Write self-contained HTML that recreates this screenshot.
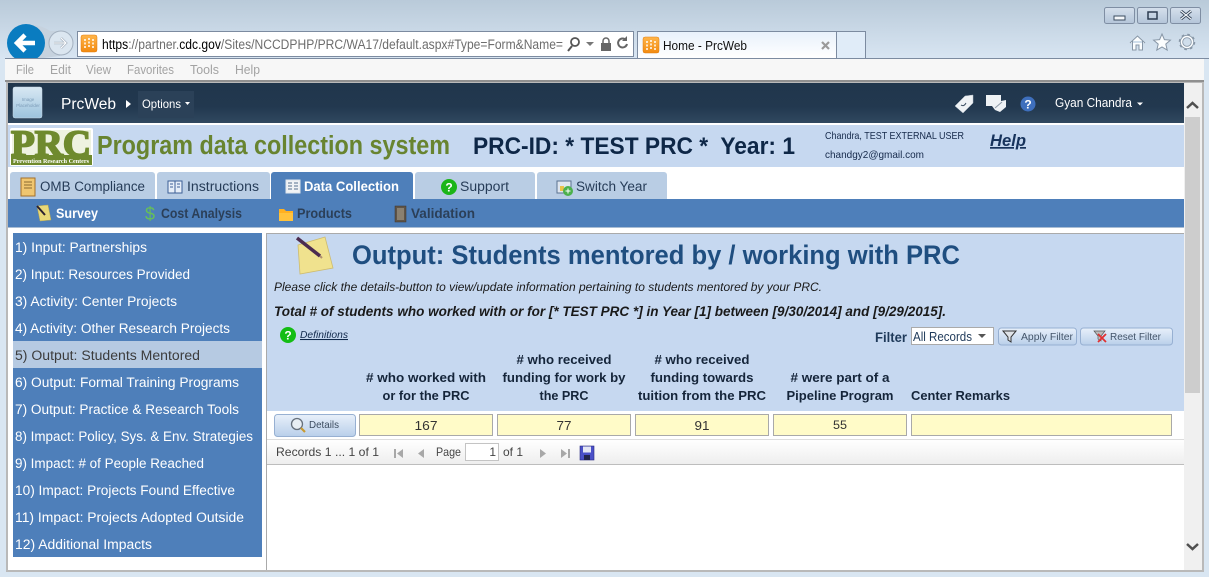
<!DOCTYPE html>
<html><head><meta charset="utf-8"><title>Home - PrcWeb</title>
<style>html,body{margin:0;padding:0;width:1209px;height:577px;overflow:hidden;background:#d9e6f2}svg{display:block}text{font-family:"Liberation Sans",sans-serif;white-space:pre}.n{font-size:13.5px;fill:#fff}</style></head><body>
<svg width="1209" height="577" viewBox="0 0 1209 577" xmlns="http://www.w3.org/2000/svg">
<defs>
<linearGradient id="chrome" x1="0" y1="0" x2="0" y2="1"><stop offset="0" stop-color="#b9cad9"/><stop offset="1" stop-color="#d9e6f3"/></linearGradient>
<linearGradient id="nav" x1="0" y1="0" x2="0" y2="1"><stop offset="0" stop-color="#20364c"/><stop offset=".6" stop-color="#22384f"/><stop offset="1" stop-color="#30485f"/></linearGradient>
<linearGradient id="btn" x1="0" y1="0" x2="0" y2="1"><stop offset="0" stop-color="#e8f0fa"/><stop offset="1" stop-color="#b9cfea"/></linearGradient>
<linearGradient id="tab" x1="0" y1="0" x2="0" y2="1"><stop offset="0" stop-color="#e8f1fb"/><stop offset="1" stop-color="#fff"/></linearGradient>
<linearGradient id="pager" x1="0" y1="0" x2="0" y2="1"><stop offset="0" stop-color="#fff"/><stop offset="1" stop-color="#eee"/></linearGradient>
<linearGradient id="win" x1="0" y1="0" x2="0" y2="1"><stop offset="0" stop-color="#d5e0ec"/><stop offset="1" stop-color="#b4c5d9"/></linearGradient>
<linearGradient id="ph" x1="0" y1="0" x2="0" y2="1"><stop offset="0" stop-color="#d8e8f3"/><stop offset="1" stop-color="#9cc3dd"/></linearGradient>
<linearGradient id="fav" x1="0" y1="0" x2="0" y2="1"><stop offset="0" stop-color="#ffb54a"/><stop offset="1" stop-color="#f28a10"/></linearGradient>
</defs>

<!-- window chrome -->
<rect width="1209" height="577" fill="#d9e6f2"/>
<rect width="1209" height="60" fill="url(#chrome)"/>
<g fill="url(#win)" stroke="#7f8ea3"><rect x="1104.500" y="7.500" width="30" height="16" rx="2"/><rect x="1137.500" y="7.500" width="30" height="16" rx="2"/><rect x="1170.500" y="7.500" width="30" height="16" rx="2"/></g>
<rect x="1114" y="16" width="11" height="4" fill="#f4f7fa" stroke="#3c4c60"/>
<rect x="1148" y="12" width="9" height="7" fill="none" stroke="#2c3c50" stroke-width="1.500"/>
<path d="M1181 11l10 8M1191 11l-10 8" stroke="#2c3c50" stroke-width="3"/><path d="M1181 11l10 8M1191 11l-10 8" stroke="#f0f4f8" stroke-width="1.200"/>

<!-- back/forward -->
<path d="M27 25 Q40 24 50 31 L60 31 L60 56 L27 60Z" fill="#c6d2de"/>
<circle cx="61" cy="43" r="12" fill="#dbe6f0" stroke="#a3b0bf"/>
<path d="M54 43h12M61 38l5 5-5 5" stroke="#aab5c2" stroke-width="2.500" fill="none"/>
<path d="M54 43h12M61 38l5 5-5 5" stroke="#fff" stroke-width="1" fill="none"/>
<circle cx="26" cy="43" r="19" fill="#0a7cc0"/>
<path d="M35 43H18M25 35l-8 8 8 8" stroke="#fff" stroke-width="4.500" fill="none"/>

<!-- address bar -->
<rect x="77.500" y="31.500" width="556" height="25" fill="#fff" stroke="#7c8ba0"/>
<rect x="81" y="35" width="16" height="17" rx="2" fill="url(#fav)" stroke="#e07c10" stroke-width=".5"/>
<path d="M85 39v9M89 38v10M93 39v9" stroke="#fff" stroke-width="1.500" stroke-dasharray="2 1.500"/>
<text x="102" y="49" font-size="13.500" textLength="461" lengthAdjust="spacingAndGlyphs" fill="#6d6d6d"><tspan fill="#000">https</tspan>://partner.<tspan fill="#000">cdc.gov</tspan>/Sites/NCCDPHP/PRC/WA17/default.aspx#Type=Form&amp;Name=</text>
<circle cx="575" cy="42" r="4" fill="none" stroke="#555" stroke-width="1.800"/><path d="M572 46l-4 5" stroke="#555" stroke-width="2"/>
<path d="M586 42h8l-4 4z" fill="#777"/>
<rect x="601" y="43" width="10" height="8" fill="#666"/><path d="M603 43v-2a3 3 0 0 1 6 0v2" fill="none" stroke="#666" stroke-width="1.500"/>
<path d="M626 40a4.500 4.500 0 1 0 1 4" fill="none" stroke="#666" stroke-width="2"/><path d="M627 36v5h-5z" fill="#666"/>

<!-- tab -->
<rect x="637.500" y="31.500" width="199" height="27" fill="url(#tab)" stroke="#7c8ba0"/>
<rect x="836.500" y="31.500" width="29" height="27" fill="#e0ecf8" stroke="#7c8ba0"/>
<rect x="643" y="37" width="16" height="16" rx="2" fill="url(#fav)" stroke="#e07c10" stroke-width=".5"/>
<path d="M647 41v9M651 40v10M655 41v9" stroke="#fff" stroke-width="1.500" stroke-dasharray="2 1.500"/>
<text x="663" y="50" font-size="13" textLength="84" lengthAdjust="spacingAndGlyphs" fill="#111">Home - PrcWeb</text>
<path d="M822 42l7 7M829 42l-7 7" stroke="#9a9a9a" stroke-width="2.200"/>

<!-- home star gear -->
<path d="M1130 43l7.500-7 7.500 7M1132.500 41v9h3.500v-5h3v5h3.500v-9" fill="#fbfdfe" stroke="#8796a6"/>
<path d="M1162 34l2.400 5.600 6 .5-4.600 4 1.400 6-5.200-3.200-5.200 3.200 1.400-6-4.600-4 6-.5z" fill="#fbfdfe" stroke="#8796a6"/>
<circle cx="1187" cy="42" r="5.500" fill="none" stroke="#8796a6" stroke-width="3.200"/><circle cx="1187" cy="42" r="7" fill="none" stroke="#8796a6" stroke-width="2.500" stroke-dasharray="2.500 3"/><circle cx="1187" cy="42" r="5.500" fill="none" stroke="#fbfdfe" stroke-width="1.500"/>

<!-- menu bar -->
<rect x="5" y="58" width="1204" height="1" fill="#7c8ba0"/>
<rect x="5" y="59" width="1199" height="21" fill="#f7f7f7"/>
<rect x="5" y="80" width="1199" height="2" fill="#8f8f8f"/>
<g font-size="12.500" fill="#a3a3a3"><text x="16" y="74" textLength="18" lengthAdjust="spacingAndGlyphs">File</text><text x="50" y="74" textLength="21" lengthAdjust="spacingAndGlyphs">Edit</text><text x="86" y="74" textLength="25" lengthAdjust="spacingAndGlyphs">View</text><text x="127" y="74" textLength="47" lengthAdjust="spacingAndGlyphs">Favorites</text><text x="190" y="74" textLength="29" lengthAdjust="spacingAndGlyphs">Tools</text><text x="235" y="74" textLength="25" lengthAdjust="spacingAndGlyphs">Help</text></g>

<!-- page -->
<rect x="6" y="82" width="1198" height="490" fill="#b9b9b9"/>
<rect x="8" y="83" width="1194" height="487" fill="#fff"/>
<rect x="8" y="83" width="1176" height="40" fill="url(#nav)"/>
<rect x="13" y="87" width="29" height="31" rx="2" fill="url(#ph)" stroke="#c6d6e4" stroke-width=".5"/>
<text x="28" y="101" font-size="4.500" fill="#7d9cb8" text-anchor="middle">Image</text><text x="28" y="107" font-size="4.500" fill="#7d9cb8" text-anchor="middle">Placeholder</text>
<text x="61" y="109" font-size="15.500" textLength="55" lengthAdjust="spacingAndGlyphs" fill="#fff">PrcWeb</text>
<path d="M126 100l5 4-5 4z" fill="#fff"/>
<rect x="138" y="91" width="56" height="27" fill="#2b4158"/>
<text x="142" y="108" font-size="12" textLength="39" lengthAdjust="spacingAndGlyphs" fill="#fff">Options</text>
<path d="M185 102h5l-2.500 3z" fill="#fff"/>
<path d="M955 106l10-10 8-1 0 8-10 10z" fill="#eef2f5" stroke="#b8c2cc" stroke-width=".5"/><path d="M961 105q3 2 5-2" stroke="#3a4e62" fill="none"/>
<path d="M986 95h15v6l5-1 0 7-6 5-5-2-3-4h-6z" fill="#eef2f5"/><path d="M995 108l7-6" stroke="#8a97a5"/>
<circle cx="1028" cy="104" r="7.500" fill="#3e6fbd"/><text x="1028" y="108.500" font-size="12" font-weight="bold" fill="#fff" text-anchor="middle">?</text>
<text x="1055" y="107" font-size="12.500" textLength="77" lengthAdjust="spacingAndGlyphs" fill="#fff">Gyan Chandra</text>
<path d="M1137 102.500h6l-3 3z" fill="#fff"/>

<!-- scrollbar -->
<rect x="1184" y="83" width="18" height="487" fill="#f0f0f0"/>
<rect x="1185" y="117" width="15" height="276" fill="#cdcdcd"/>
<path d="M1187 108l5.500-5 5.500 5" fill="none" stroke="#505050" stroke-width="2.500"/>
<path d="M1187 544l5.500 5 5.500-5" fill="none" stroke="#505050" stroke-width="2.500"/>

<!-- header band -->
<rect x="8" y="125" width="1176" height="42" fill="#c6d8f0"/>
<rect x="10" y="128" width="83" height="38" rx="2" fill="#fff"/>
<rect x="12" y="130" width="79" height="26" fill="#eef2e0"/>
<text x="51" y="156" font-size="37" font-weight="bold" textLength="80" lengthAdjust="spacingAndGlyphs" text-anchor="middle" stroke="#6f8a2e" stroke-width="1.800" style="font-family:'Liberation Serif',serif" fill="#6f8a2e">PRC</text>
<rect x="11" y="155" width="81" height="10" fill="#6f8a2e"/>
<text x="51" y="163" font-size="6.500" font-weight="bold" text-anchor="middle" textLength="76" lengthAdjust="spacingAndGlyphs" style="font-family:'Liberation Serif',serif" fill="#fff">Prevention Research Centers</text>
<text x="97" y="154" font-size="25.500" font-weight="bold" textLength="353" lengthAdjust="spacingAndGlyphs" fill="#688430">Program data collection system</text>
<text x="473" y="154" font-size="24.500" font-weight="bold" textLength="322" lengthAdjust="spacingAndGlyphs" fill="#0e2747">PRC-ID: * TEST PRC *  Year: 1</text>
<text x="825" y="139" font-size="10.500" textLength="139" lengthAdjust="spacingAndGlyphs" fill="#15294a">Chandra, TEST EXTERNAL USER</text>
<text x="825" y="158" font-size="10.500" textLength="99" lengthAdjust="spacingAndGlyphs" fill="#15294a">chandgy2@gmail.com</text>
<text x="990" y="146" font-size="17" font-weight="bold" font-style="italic" text-decoration="underline" textLength="36" lengthAdjust="spacingAndGlyphs" fill="#17335c">Help</text>

<!-- tabs -->
<g fill="#b9cde4"><path d="M10 199v-24a3 3 0 0 1 3-3h139a3 3 0 0 1 3 3v24z"/><path d="M157 199v-24a3 3 0 0 1 3-3h107a3 3 0 0 1 3 3v24z"/><path d="M415 199v-24a3 3 0 0 1 3-3h114a3 3 0 0 1 3 3v24z"/><path d="M537 199v-24a3 3 0 0 1 3-3h124a3 3 0 0 1 3 3v24z"/></g>
<path d="M271 199v-24a3 3 0 0 1 3-3h136a3 3 0 0 1 3 3v24z" fill="#4e7fba"/>
<rect x="8" y="199" width="1176" height="28" fill="#4e7fba"/>
<rect x="8" y="227" width="1176" height="1" fill="#a9bdd4"/>
<rect x="21" y="178" width="14" height="18" fill="#f0c670" stroke="#a4702a"/><path d="M24 182h8M24 185h8M24 188h8" stroke="#8a6a30"/>
<rect x="168" y="181" width="14" height="12" fill="#e6eef8" stroke="#3c5f96"/><path d="M175 181v12M170 184h3M170 187h3M177 184h3M177 187h3" stroke="#3c5f96"/>
<rect x="286" y="180" width="14" height="13" fill="#f1f3f5" stroke="#dfe5ec"/><path d="M288 183h4M294 183h4M288 186h4M294 186h4M288 189h4M294 189h4" stroke="#57708f"/>
<circle cx="449" cy="187" r="8" fill="#1cb518"/><text x="449" y="191.500" font-size="12" font-weight="bold" fill="#fff" text-anchor="middle">?</text>
<rect x="557" y="181" width="14" height="12" fill="#dfe6ef" stroke="#5a7290"/><rect x="560" y="186" width="4" height="5" fill="#e9c24a"/><circle cx="568" cy="191" r="5" fill="#4bb04b"/><path d="M565.500 191h5M568 188.500v5" stroke="#fff"/>
<g font-size="13.500"><text x="40" y="191" textLength="105" lengthAdjust="spacingAndGlyphs" fill="#263c58">OMB Compliance</text><text x="187" y="191" textLength="72" lengthAdjust="spacingAndGlyphs" fill="#263c58">Instructions</text><text x="304" y="191" font-weight="bold" textLength="95" lengthAdjust="spacingAndGlyphs" fill="#fff">Data Collection</text><text x="460" y="191" textLength="49" lengthAdjust="spacingAndGlyphs" fill="#263c58">Support</text><text x="576" y="191" textLength="71" lengthAdjust="spacingAndGlyphs" fill="#263c58">Switch Year</text></g>

<!-- subnav -->
<path d="M37 206l11-1 3 15-11 1z" fill="#e8d878" stroke="#b8a850" stroke-width=".5"/><path d="M37 206l8 9" stroke="#2a2030" stroke-width="2"/>
<text x="150" y="220" font-size="18" text-anchor="middle" fill="#66c058">$</text>
<path d="M279 209h5l2 2h7v10h-14z" fill="#ffb020"/><rect x="279" y="213" width="14" height="8" fill="#ffc23c"/>
<rect x="395" y="206" width="11" height="16" fill="#5e5448" stroke="#3c342c" stroke-width=".5"/><rect x="397" y="208" width="7" height="12" fill="#8a8070"/>
<g font-size="13.500" font-weight="bold" fill="#2b3f58"><text x="56" y="218" textLength="42" lengthAdjust="spacingAndGlyphs" fill="#fff">Survey</text><text x="161" y="218" textLength="81" lengthAdjust="spacingAndGlyphs">Cost Analysis</text><text x="297" y="218" textLength="55" lengthAdjust="spacingAndGlyphs">Products</text><text x="411" y="218" textLength="64" lengthAdjust="spacingAndGlyphs">Validation</text></g>

<!-- left nav -->
<rect x="13" y="233" width="249" height="324" fill="#4e7fba"/>
<rect x="13" y="341" width="249" height="27" fill="#b6cae2"/>
<text class="n" x="15" y="252" textLength="132" lengthAdjust="spacingAndGlyphs">1) Input: Partnerships</text>
<text class="n" x="15" y="279" textLength="175" lengthAdjust="spacingAndGlyphs">2) Input: Resources Provided</text>
<text class="n" x="15" y="306" textLength="162" lengthAdjust="spacingAndGlyphs">3) Activity: Center Projects</text>
<text class="n" x="15" y="333" textLength="215" lengthAdjust="spacingAndGlyphs">4) Activity: Other Research Projects</text>
<text class="n" x="15" y="360" textLength="185" lengthAdjust="spacingAndGlyphs" style="fill:#3c3c3c">5) Output: Students Mentored</text>
<text class="n" x="15" y="387" textLength="224" lengthAdjust="spacingAndGlyphs">6) Output: Formal Training Programs</text>
<text class="n" x="15" y="414" textLength="224" lengthAdjust="spacingAndGlyphs">7) Output: Practice &amp; Research Tools</text>
<text class="n" x="15" y="441" textLength="238" lengthAdjust="spacingAndGlyphs">8) Impact: Policy, Sys. &amp; Env. Strategies</text>
<text class="n" x="15" y="468" textLength="189" lengthAdjust="spacingAndGlyphs">9) Impact: # of People Reached</text>
<text class="n" x="15" y="495" textLength="220" lengthAdjust="spacingAndGlyphs">10) Impact: Projects Found Effective</text>
<text class="n" x="15" y="522" textLength="229" lengthAdjust="spacingAndGlyphs">11) Impact: Projects Adopted Outside</text>
<text class="n" x="15" y="549" textLength="137" lengthAdjust="spacingAndGlyphs">12) Additional Impacts</text>

<!-- content -->
<rect x="266" y="233" width="1" height="337" fill="#aaa"/>
<rect x="266" y="233" width="918" height="1" fill="#aaa"/>
<rect x="267" y="234" width="917" height="177" fill="#c6d8f0"/>
<path d="M298 245l27-8 8 31-33 6z" fill="#f0e28e" stroke="#cdbb70" stroke-width=".8"/>
<path d="M297 238l23 18" stroke="#4c2c50" stroke-width="3.500"/><path d="M320 256l2 2" stroke="#b09070" stroke-width="2"/>
<text x="352" y="264" font-size="26.500" font-weight="bold" textLength="608" lengthAdjust="spacingAndGlyphs" fill="#1f4e80">Output: Students mentored by / working with PRC</text>
<text x="274" y="291" font-size="11.500" font-style="italic" textLength="548" lengthAdjust="spacingAndGlyphs" fill="#1a1a1a">Please click the details-button to view/update information pertaining to students mentored by your PRC.</text>
<text x="274" y="316" font-size="13.500" font-weight="bold" font-style="italic" textLength="672" lengthAdjust="spacingAndGlyphs" fill="#1a1a1a">Total # of students who worked with or for [* TEST PRC *] in Year [1] between [9/30/2014] and [9/29/2015].</text>
<circle cx="288" cy="335" r="8" fill="#14bd14"/><text x="288" y="339.500" font-size="12" font-weight="bold" fill="#fff" text-anchor="middle">?</text>
<text x="300" y="338" font-size="10.500" font-style="italic" text-decoration="underline" textLength="48" lengthAdjust="spacingAndGlyphs" fill="#10284a">Definitions</text>

<!-- filter -->
<text x="875" y="342" font-size="13.500" font-weight="bold" textLength="32" lengthAdjust="spacingAndGlyphs" fill="#1f3a5a">Filter</text>
<rect x="911.500" y="327.500" width="82" height="17" fill="#fff" stroke="#aaa"/>
<text x="913" y="341" font-size="12.500" textLength="59" lengthAdjust="spacingAndGlyphs" fill="#1f3a5a">All Records</text>
<path d="M978 334h8l-4 4z" fill="#555"/>
<rect x="998.500" y="328" width="78" height="17" rx="3" fill="url(#btn)" stroke="#97b0d2"/>
<path d="M1003 331h13l-5 6v5l-3-2v-3z" fill="#dfe3e8" stroke="#333"/>
<text x="1021" y="340" font-size="10.500" textLength="52" lengthAdjust="spacingAndGlyphs" fill="#44556a">Apply Filter</text>
<rect x="1080.500" y="328" width="92" height="17" rx="3" fill="url(#btn)" stroke="#97b0d2"/>
<path d="M1094 331h11l-4 5v5l-3-2v-3z" fill="#bbb" stroke="#555" stroke-width=".7"/><path d="M1098 334l8 8M1106 334l-8 8" stroke="#e03030" stroke-width="1.800"/>
<text x="1110" y="340" font-size="10.500" textLength="51" lengthAdjust="spacingAndGlyphs" fill="#44556a">Reset Filter</text>

<!-- column headers -->
<g font-size="13" font-weight="bold" fill="#15253a" text-anchor="middle">
<text x="426" y="382" textLength="120" lengthAdjust="spacingAndGlyphs">&#35; who worked with</text><text x="426" y="400" textLength="87" lengthAdjust="spacingAndGlyphs">or for the PRC</text>
<text x="564" y="364" textLength="95" lengthAdjust="spacingAndGlyphs">&#35; who received</text><text x="564" y="382" textLength="123" lengthAdjust="spacingAndGlyphs">funding for work by</text><text x="564" y="400" textLength="49" lengthAdjust="spacingAndGlyphs">the PRC</text>
<text x="702" y="364" textLength="95" lengthAdjust="spacingAndGlyphs">&#35; who received</text><text x="702" y="382" textLength="103" lengthAdjust="spacingAndGlyphs">funding towards</text><text x="702" y="400" textLength="128" lengthAdjust="spacingAndGlyphs">tuition from the PRC</text>
<text x="840" y="382" textLength="99" lengthAdjust="spacingAndGlyphs">&#35; were part of a</text><text x="840" y="400" textLength="107" lengthAdjust="spacingAndGlyphs">Pipeline Program</text>
<text x="911" y="400" text-anchor="start" textLength="99" lengthAdjust="spacingAndGlyphs">Center Remarks</text></g>

<!-- row -->
<rect x="274.500" y="414.500" width="81" height="22" rx="3" fill="url(#btn)" stroke="#97b0d2"/>
<circle cx="297" cy="424" r="5.500" fill="#e8eef4" stroke="#66707c" stroke-width="1.300"/><path d="M301 428l4 4" stroke="#c89a30" stroke-width="2.200"/>
<text x="309" y="428" font-size="10.500" textLength="30" lengthAdjust="spacingAndGlyphs" fill="#3c4c60">Details</text>
<g fill="#fffbc8" stroke="#a9a9a9"><rect x="359.500" y="414.500" width="133" height="21"/><rect x="497.500" y="414.500" width="133" height="21"/><rect x="635.500" y="414.500" width="133" height="21"/><rect x="773.500" y="414.500" width="133" height="21"/><rect x="911.500" y="414.500" width="260" height="21"/></g>
<g font-size="13" fill="#333" text-anchor="middle"><text x="426" y="430" textLength="23" lengthAdjust="spacingAndGlyphs">167</text><text x="564" y="430" textLength="15" lengthAdjust="spacingAndGlyphs">77</text><text x="702" y="430" textLength="15" lengthAdjust="spacingAndGlyphs">91</text><text x="840" y="429" font-size="11.500" textLength="14" lengthAdjust="spacingAndGlyphs">55</text></g>

<!-- pager -->
<rect x="267" y="439" width="917" height="1" fill="#ddd"/>
<rect x="267" y="440" width="917" height="24" fill="url(#pager)"/>
<rect x="267" y="464" width="917" height="1" fill="#bdbdbd"/>
<g font-size="12" fill="#444"><text x="276" y="456" textLength="103" lengthAdjust="spacingAndGlyphs">Records 1 ... 1 of 1</text><text x="436" y="456" textLength="25" lengthAdjust="spacingAndGlyphs">Page</text><text x="503" y="456" textLength="20" lengthAdjust="spacingAndGlyphs">of 1</text></g>
<rect x="465.500" y="443.500" width="33" height="17" fill="#fff" stroke="#c4c4c4"/>
<text x="496" y="456" font-size="12" fill="#444" text-anchor="end">1</text>
<g fill="#a8a8a8"><path d="M394 449h2v9h-2zM403 449v9l-6-4.500z"/><path d="M424 449v9l-6-4.500z"/><path d="M540 449v9l6-4.500z"/><path d="M561 449v9l6-4.500zM568 449h2v9h-2z"/></g>
<rect x="580" y="446" width="14" height="14" fill="#4a50c8" stroke="#282a80" stroke-width=".6"/><rect x="583" y="446.500" width="8" height="6" fill="#e4e6f4"/><rect x="584" y="455" width="6" height="5" fill="#22244c"/>
</svg>
</body></html>
